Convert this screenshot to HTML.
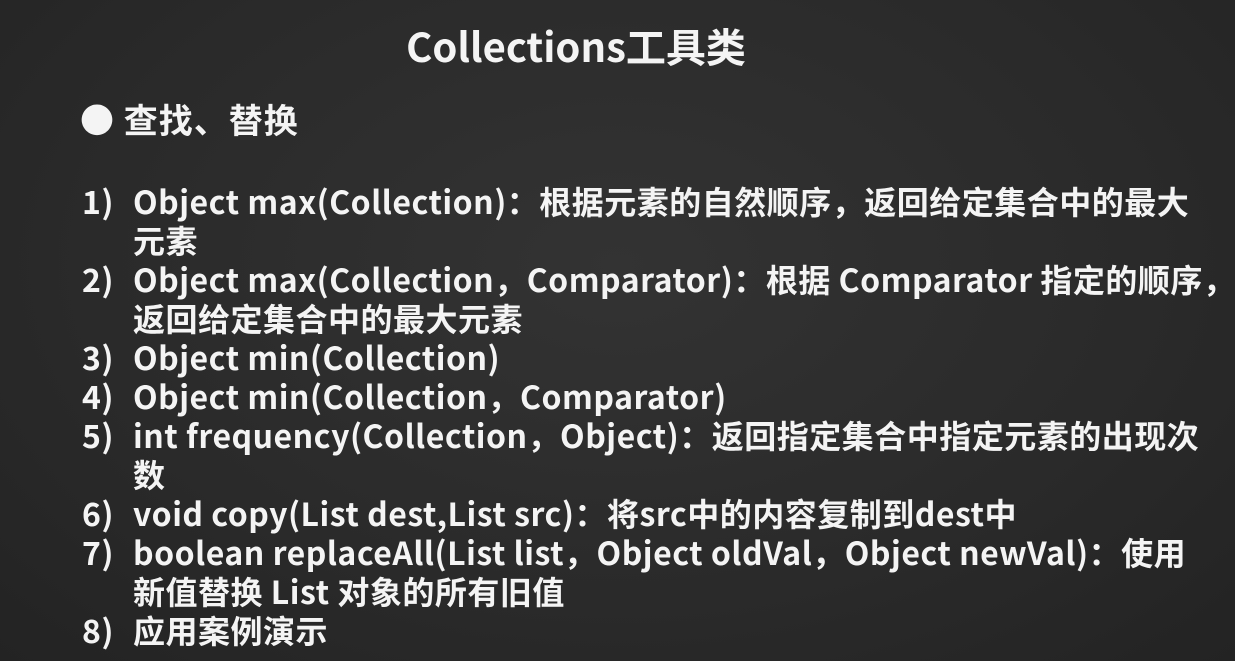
<!DOCTYPE html>
<html><head><meta charset="utf-8"><style>
html,body{margin:0;padding:0}
body{width:1235px;height:661px;overflow:hidden;background:#2b2b2b;
background:radial-gradient(ellipse at 50% 40%,#333 0%,#2a2a2a 60%,#232323 100%);
font-family:"Noto Sans CJK SC","Liberation Sans",sans-serif;color:#f4f4f4;font-weight:bold;position:relative}
.t{position:absolute;left:0;width:1152px;text-align:center;top:18px;font-size:40px;line-height:54px}
.b{position:absolute;left:80px;top:96px;font-size:34px;line-height:46px;letter-spacing:1px}
.l{position:absolute;font-size:32px;line-height:39px;white-space:nowrap;letter-spacing:0.5px}
.n{left:82px}.x{left:133px}
</style></head><body>
<div class="t">Collections工具类</div>
<div class="b">● 查找、替换</div>
<div class="l n" style="top:182px">1)</div><div class="l x" style="top:182px">Object max(Collection)：根据元素的自然顺序，返回给定集合中的最大</div>
<div class="l x" style="top:221px">元素</div>
<div class="l n" style="top:260px">2)</div><div class="l x" style="top:260px">Object max(Collection，Comparator)：根据 Comparator 指定的顺序，</div>
<div class="l x" style="top:299px">返回给定集合中的最大元素</div>
<div class="l n" style="top:338px">3)</div><div class="l x" style="top:338px">Object min(Collection)</div>
<div class="l n" style="top:377px">4)</div><div class="l x" style="top:377px">Object min(Collection，Comparator)</div>
<div class="l n" style="top:416px">5)</div><div class="l x" style="top:416px">int frequency(Collection，Object)：返回指定集合中指定元素的出现次</div>
<div class="l x" style="top:455px">数</div>
<div class="l n" style="top:494px">6)</div><div class="l x" style="top:494px">void copy(List dest,List src)：将src中的内容复制到dest中</div>
<div class="l n" style="top:533px">7)</div><div class="l x" style="top:533px">boolean replaceAll(List list，Object oldVal，Object newVal)：使用</div>
<div class="l x" style="top:572px">新值替换 List 对象的所有旧值</div>
<div class="l n" style="top:611px">8)</div><div class="l x" style="top:611px">应用案例演示</div>
</body></html>
